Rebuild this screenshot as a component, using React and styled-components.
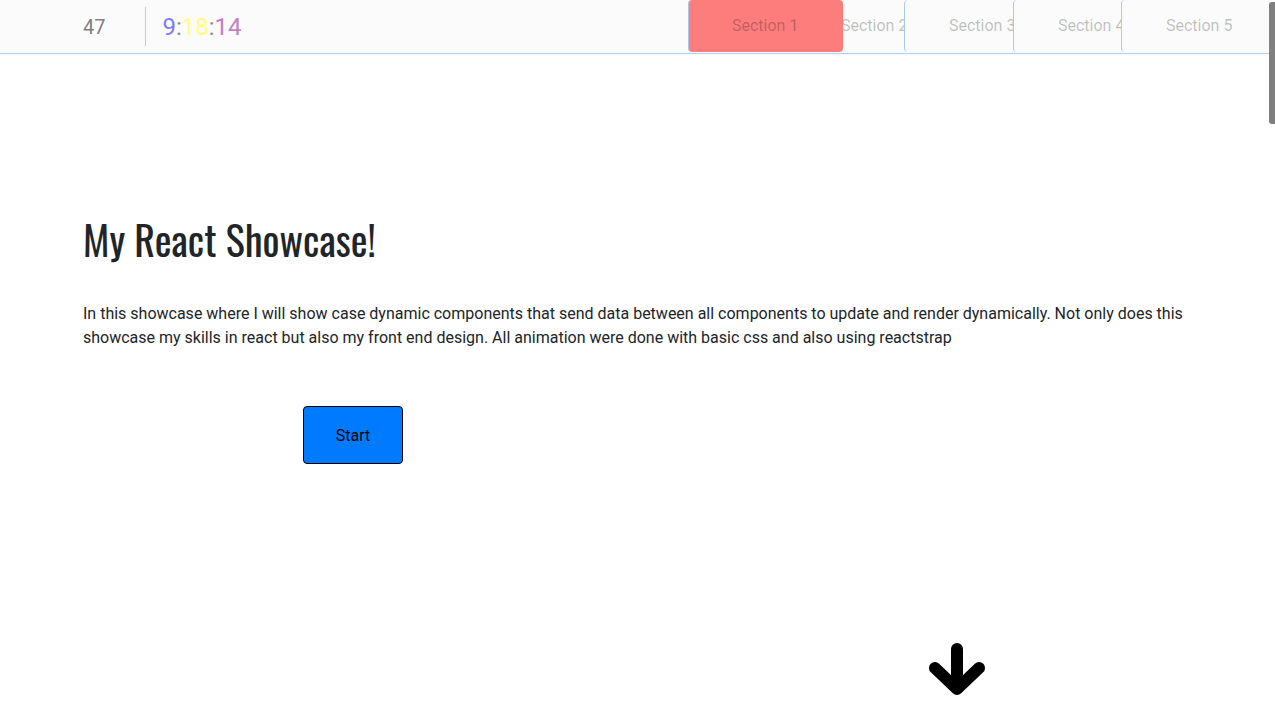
import styled, { createGlobalStyle } from "styled-components";

const sections = [
	{ name: "Section 1", width: 155, pad: 43, edge: true },
	{ name: "Section 2", width: 61, pad: 0, shift: -2, edge: false },
	{ name: "Section 3", width: 109, pad: 44, edge: true },
	{ name: "Section 4", width: 108, pad: 44, edge: true },
	{ name: "Section 5", width: 154, pad: 44, edge: true },
];

export default function App() {
	return (
		<>
			<GlobalStyle />
			<NavBar>
				<Counter>47</Counter>
				<NavDivider />
				<Clock>
					<Digit color="#7b7bff">9</Digit>
					<Colon>:</Colon>
					<Digit color="#ffff80">18</Digit>
					<Colon>:</Colon>
					<Digit color="#c47fc4">14</Digit>
				</Clock>
				<TabList>
					{sections.map((s, i) => (
						<Tab
							key={s.name}
							width={s.width}
							pad={s.pad}
							shift={s.shift || 0}
							edge={s.edge}
							active={i === 0}
						>
							{s.name}
						</Tab>
					))}
				</TabList>
			</NavBar>
			<ScrollThumb />
			<Hero>
				<Title>My React Showcase!</Title>
				<Intro>
					In this showcase where I will show case dynamic components that send data
					between all components to update and render dynamically. Not only does this
					showcase my skills in react but also my front end design. All animation were
					done with basic css and also using reactstrap
				</Intro>
				<StartBtn>Start</StartBtn>
				<ArrowBox>
					<svg width="62" height="60" viewBox="926 640 62 60">
						<path
							d="M957 649 L957 688 M935 668 L957 689 L979 668"
							fill="none"
							stroke="#000"
							strokeWidth="12"
							strokeLinecap="round"
							strokeLinejoin="round"
						/>
					</svg>
				</ArrowBox>
			</Hero>
			<Page />
			<Page />
			<Page />
			<Page />
			<Page />
		</>
	);
}

const GlobalStyle = createGlobalStyle`
	* { box-sizing: border-box; }
	body {
		margin: 0;
		font-family: Roboto, "Liberation Sans", sans-serif;
		color: #212529;
		background: #fff;
	}
`;

// ---------------------- Nav ---------------------- //

const NavBar = styled.nav`
	position: sticky;
	top: 0;
	z-index: 5;
	display: flex;
	align-items: center;
	height: 54px;
	padding-left: 83px;
	background-color: #fafbfa;
	border-bottom: 1px solid #b0cdf2;
`;

const Counter = styled.span`
	font-size: 20px;
	color: #808080;
`;

const NavDivider = styled.div`
	width: 1px;
	height: 39px;
	margin-left: 40px;
	margin-right: 17px;
	background-color: #b0cdf2;
`;

const Clock = styled.div`
	font-size: 24px;
	line-height: 1;
	margin-left: -1px;
`;

const Digit = styled.span`
	color: ${(props) => props.color};
`;

const Colon = styled.span`
	color: #8a8a8a;
`;

const TabList = styled.div`
	display: flex;
	align-self: flex-start;
	margin-left: auto;
	height: 53px;
`;

const Tab = styled.div`
	width: ${(props) => props.width}px;
	height: 52px;
	padding-left: ${(props) => props.pad}px;
	text-indent: ${(props) => props.shift}px;
	line-height: 51px;
	font-size: 16px;
	white-space: nowrap;
	overflow: hidden;
	color: rgba(0, 0, 0, 0.25);
	border-left: ${(props) => (props.edge ? "1px solid #a9c9f0" : "none")};
	border-radius: 4px;
	background-color: ${(props) => (props.active ? "rgba(255, 0, 0, 0.5)" : "transparent")};
`;

const ScrollThumb = styled.div`
	position: fixed;
	top: 2px;
	right: 0;
	z-index: 10;
	width: 6px;
	height: 122px;
	background-color: #7f7f7f;
	border-radius: 3px 0 0 3px;
`;

// ---------------------- Hero ---------------------- //

const Hero = styled.section`
	height: 664px;
	padding: 0 83px;
	overflow: hidden;
`;

const Title = styled.h1`
	margin: 161px 0 0;
	font-family: Oswald, "Liberation Sans Narrow", "DejaVu Sans Condensed", sans-serif;
	font-weight: 400;
	font-size: 40px;
	line-height: 48px;
	color: #212529;
`;

const Intro = styled.p`
	margin: 39px 0 0;
	font-size: 16px;
	line-height: 24px;
	color: #212529;
`;

const StartBtn = styled.button`
	display: block;
	width: 100px;
	height: 58px;
	margin: 56px 0 0 220px;
	background-color: #007bff;
	border: 1px solid #000;
	border-radius: 4px;
	font-family: Roboto, sans-serif;
	font-size: 16px;
	color: #000;
	cursor: pointer;
`;

const ArrowBox = styled.div`
	margin: 176px 0 0 843px;
	height: 60px;
`;

const Page = styled.section`
	height: 718px;
`;
